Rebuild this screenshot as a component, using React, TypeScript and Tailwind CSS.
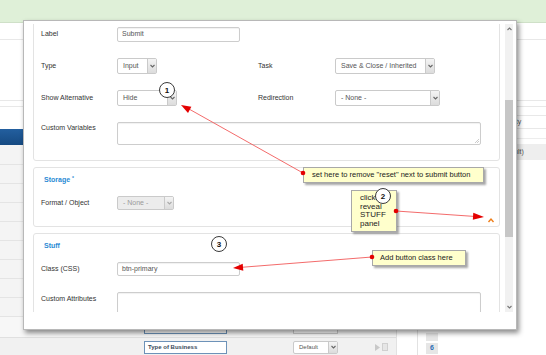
import React from 'react';

const Chevron = ({ dir = 'down', color = '#666' }: { dir?: 'down' | 'up'; color?: string }) => (
  <svg width="5" height="4" viewBox="0 0 5 4">
    <polyline
      points={dir === 'down' ? '0.5,1 2.5,3 4.5,1' : '0.5,3 2.5,1 4.5,3'}
      fill="none"
      stroke={color}
      strokeWidth="1.1"
    />
  </svg>
);

function Select({ className, text, disabled }: { className: string; text: string; disabled?: boolean }) {
  return (
    <div
      className={`flex h-full items-stretch rounded-[2px] border border-[#cacaca] ${
        disabled ? 'bg-[#ececec] text-[#9a9a9a]' : 'bg-white text-[#555]'
      } ${className}`}
    >
      <div className="flex flex-1 items-center pl-[5px] truncate">{text}</div>
      <div className="flex w-[9px] items-center justify-center border-l border-[#cacaca] bg-gradient-to-b from-[#f4f4f4] to-[#dcdcdc]">
        <Chevron color={disabled ? '#aaa' : '#666'} />
      </div>
    </div>
  );
}

function Input({ className, value }: { className: string; value: string }) {
  return (
    <div className={`flex h-full items-center rounded-[2px] border border-[#cdcdcd] bg-white pl-[4px] text-[#555] shadow-[inset_0_1px_1px_rgba(0,0,0,0.06)] ${className}`}>
      {value}
    </div>
  );
}

function TextArea({ className }: { className: string }) {
  return (
    <div className={`relative rounded-[2px] border border-[#cdcdcd] bg-white shadow-[inset_0_1px_1px_rgba(0,0,0,0.06)] ${className}`}>
      <svg className="absolute bottom-[1px] right-[1px]" width="4" height="4" viewBox="0 0 4 4">
        <line x1="0" y1="4" x2="4" y2="0" stroke="#aaa" strokeWidth="0.6" />
        <line x1="2" y1="4" x2="4" y2="2" stroke="#aaa" strokeWidth="0.6" />
      </svg>
    </div>
  );
}

const Label = ({ children }: { children: React.ReactNode }) => (
  <div className="flex items-center text-[#333]">{children}</div>
);

const SectionTitle = ({ children }: { children: React.ReactNode }) => (
  <div className="ml-[3px] flex h-[9px] items-center font-bold text-[#2a8ad4]">{children}</div>
);

function BackgroundPage() {
  return (
    <div className="flex h-full flex-col">
      <div className="h-[23px] shrink-0 border-b border-[#cfe0c8] bg-[#dff0d8]" />
      <div className="flex flex-1">
        {/* left column */}
        <div className="flex w-[397px] flex-col border-r border-[#e2e2e2]">
          <div className="h-[17px] border-b border-[#e8e8e8]" />
          <div className="h-[61px] border-b border-[#e8e8e8]" />
          <div className="h-[6px] border-b border-[#e8e8e8]" />
          <div className="h-[22px]" />
          <div className="h-[16px] bg-gradient-to-b from-[#235f9f] to-[#164a82]" />
          <div className="h-[20px] border-b border-[#e4e4e4] bg-[#f4f4f4]" />
          {Array.from({ length: 8 }).map((_, i) => (
            <div key={i} className="h-[19px] border-b border-[#e4e4e4] bg-[#f4f4f4]" />
          ))}
          <div className="flex h-[21px] items-end border-b border-[#e0e0e0] bg-[#f7f7f7] pb-[3px]">
            <div className="ml-[144px] h-[13px] w-[83px] border border-[#6d92b8] bg-white" />
            <div className="ml-[66px] h-[13px] w-[45px] border border-[#ccc] bg-white" />
          </div>
          <div className="flex h-[18px] items-center bg-[#f1f1f1] text-[6px]">
            <div className="ml-[144px] flex h-[13px] w-[83px] items-center border border-[#6d92b8] bg-white pl-[3px] font-bold text-[#3a4a5a]">
              Type of Business
            </div>
            <div className="ml-[66px] h-[13px] w-[45px] text-[6px]">
              <Select className="w-[45px]" text="Default" />
            </div>
            <div className="ml-[37px] flex items-center gap-[2px]">
              <svg width="5" height="7" viewBox="0 0 5 7">
                <polygon points="0,0 5,3.5 0,7" fill="#c8c8c8" />
              </svg>
              <div className="h-[8px] w-[6px] border border-[#d0d0d0] bg-[#e6e6e6]" />
            </div>
          </div>
        </div>
        <div className="w-[20px]" />
        {/* right column */}
        <div className="flex flex-1 flex-col border-l border-[#e2e2e2] text-[7px] text-[#555]">
          <div className="h-[17px] border-b border-[#e8e8e8]" />
          <div className="h-[61px] border-b border-[#e8e8e8]" />
          <div className="h-[6px] border-b border-[#e8e8e8]" />
          <div className="h-[9px] border-b border-[#e8e8e8]" />
          <div className="flex h-[13px] items-center border-b border-[#e8e8e8] pl-[78px]">Visibility</div>
          <div className="h-[10px] border-b border-[#ededed]" />
          <div className="h-[5px]" />
          <div className="flex h-[16px] items-center bg-[#eeeeee] pl-[79px]">(Default)</div>
          <div className="flex-1" />
          <div className="mb-[2px] ml-[8px] h-[8px] w-[12px] bg-[#e6e6e6]" />
          <div className="mb-[2px] ml-[8px] flex h-[11px] w-[12px] items-center justify-center bg-[#e6e6e6] text-[7px] font-bold text-[#2a6db5]">
            6
          </div>
        </div>
      </div>
    </div>
  );
}

function Modal() {
  return (
    <div className="absolute left-[23px] top-[20px] h-[310px] w-[494px] border border-[#b8b8b8] bg-white shadow-[2px_3px_5px_rgba(0,0,0,0.45)]">
      <div className="flex gap-[5px] pl-[9px] pr-[3px] pt-[3px] text-[7px]">
        <div className="h-[288px] w-[467px] overflow-hidden">
          {/* Section 1 */}
          <section className="-mt-[8px] flex flex-col gap-[16px] rounded-[3px] border border-[#e3e3e3] pb-[15px] pl-[7px] pt-[10px]">
            <div className="grid h-[15px] grid-cols-[76px_141px_77px_1fr]">
              <Label>Label</Label>
              <Input className="w-[123px]" value="Submit" />
            </div>
            <div className="grid h-[16px] grid-cols-[76px_141px_77px_1fr]">
              <Label>Type</Label>
              <Select className="w-[40px]" text="Input" />
              <Label>Task</Label>
              <Select className="w-[100px]" text="Save & Close / Inherited" />
            </div>
            <div className="grid h-[16px] grid-cols-[76px_141px_77px_1fr]">
              <Label>Show Alternative</Label>
              <Select className="w-[60px]" text="Hide" />
              <Label>Redirection</Label>
              <Select className="w-[105px]" text="- None -" />
            </div>
            <div className="grid h-[23px] grid-cols-[76px_1fr]">
              <div className="pt-[1px] text-[#333]">Custom Variables</div>
              <TextArea className="h-[23px] w-[364px]" />
            </div>
          </section>

          {/* Section 2 */}
          <section className="mt-[6px] flex flex-col gap-[11px] rounded-[3px] border border-[#e3e3e3] pb-[16px] pl-[7px] pt-[8px]">
            <SectionTitle>
              Storage<sup className="ml-[2px] text-[5px]">*</sup>
            </SectionTitle>
            <div className="grid h-[14px] grid-cols-[76px_1fr]">
              <Label>Format / Object</Label>
              <Select className="w-[57px]" text="- None -" disabled />
            </div>
          </section>

          {/* Section 3 */}
          <section className="mt-[6px] flex flex-col rounded-[3px] border border-[#e3e3e3] pl-[7px] pt-[8px]">
            <SectionTitle>Stuff</SectionTitle>
            <div className="mt-[11px] grid h-[14px] grid-cols-[76px_1fr]">
              <Label>Class (CSS)</Label>
              <Input className="w-[123px]" value="btn-primary" />
            </div>
            <div className="mt-[16px] grid grid-cols-[76px_1fr]">
              <div className="pt-[2px] text-[#333]">Custom Attributes</div>
              <TextArea className="h-[30px] w-[364px]" />
            </div>
          </section>
        </div>

        {/* scrollbar */}
        <div className="flex h-[288px] w-[8px] flex-col items-center bg-[#f1f1f1]">
          <div className="flex h-[10px] items-center justify-center">
            <Chevron dir="up" color="#777" />
          </div>
          <div className="h-[66px]" />
          <div className="h-[137px] w-full bg-[#c6c6c6]" />
          <div className="flex-1" />
          <div className="flex h-[10px] items-center justify-center">
            <Chevron color="#777" />
          </div>
        </div>
      </div>
    </div>
  );
}

function Annotations() {
  const box =
    'absolute border border-[#a8a8a8] bg-[#ffffcc] text-[7.5px] leading-[8.5px] text-[#222] shadow-[2px_2px_2px_rgba(0,0,0,0.35)]';
  return (
    <>
      <div className={`${box} left-[303px] top-[167px] flex h-[16px] w-[181px] items-center pl-[8px]`}>
        set here to remove "reset" next to submit button
      </div>
      <div className={`${box} left-[351px] top-[190px] h-[42px] w-[46px] pl-[8px] pt-[3px] text-[8px] leading-[8.7px]`}>
        click
        <br />
        reveal
        <br />
        STUFF
        <br />
        panel
      </div>
      <div className={`${box} left-[372px] top-[250px] flex h-[16px] w-[94px] items-center pl-[7px]`}>
        Add button class here
      </div>

      <svg className="pointer-events-none absolute left-0 top-0" width="546" height="355" viewBox="0 0 546 355">
        <g stroke="#f25a5a" strokeWidth="0.9">
          <line x1="303" y1="173" x2="189" y2="109" />
          <line x1="396" y1="211" x2="474" y2="216.4" />
          <line x1="372" y1="257" x2="243" y2="267.2" />
        </g>
        <g fill="#e40000">
          <polygon points="181,105 191.4,106.8 188,113" />
          <polygon points="484,217 473.3,212.8 472.8,219.7" />
          <polygon points="233,268 243.3,270.7 242.7,263.7" />
          <circle cx="303" cy="173" r="2.3" />
          <circle cx="396" cy="211" r="2.3" />
          <circle cx="372" cy="257" r="2.3" />
        </g>
        <polyline points="488.5,222 491,219 493.5,222" fill="none" stroke="#ef7f1a" strokeWidth="1.4" />
        <g fill="#fff" stroke="#3a3a3a" strokeWidth="1">
          <circle cx="167" cy="90" r="7.5" />
          <circle cx="383" cy="196" r="7.5" />
          <circle cx="219" cy="244" r="7.5" />
        </g>
        <g
          fontFamily="'Liberation Sans', Arial, sans-serif"
          fontSize="8"
          fontWeight="bold"
          fill="#111"
          textAnchor="middle"
        >
          <text x="167" y="93">1</text>
          <text x="383" y="199">2</text>
          <text x="219" y="247">3</text>
        </g>
      </svg>
    </>
  );
}

export default function App() {
  return (
    <div className="relative h-[355px] w-[546px] overflow-hidden bg-white font-['Liberation_Sans',Arial,sans-serif]">
      <BackgroundPage />
      <Modal />
      <Annotations />
    </div>
  );
}
